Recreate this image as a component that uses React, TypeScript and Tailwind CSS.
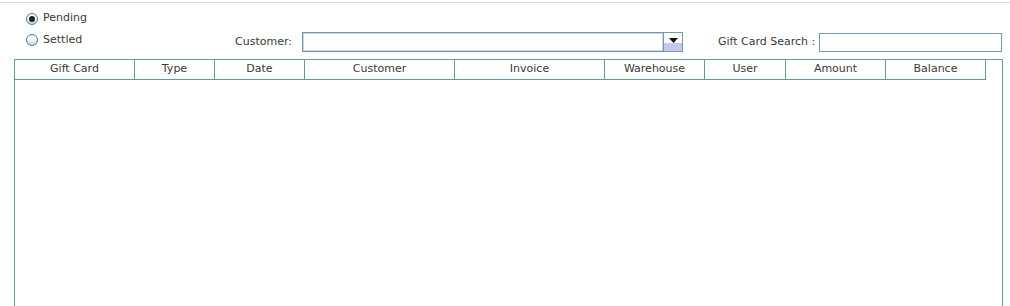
const columns = [
  { label: "Gift Card", w: "w-[120px]" },
  { label: "Type", w: "w-[80px]" },
  { label: "Date", w: "w-[90px]" },
  { label: "Customer", w: "w-[150px]" },
  { label: "Invoice", w: "w-[150px]" },
  { label: "Warehouse", w: "w-[100px]" },
  { label: "User", w: "w-[81px]" },
  { label: "Amount", w: "w-[100px]" },
  { label: "Balance", w: "w-[100px]" },
];

const Radio = ({ checked, label }: { checked?: boolean; label: string }) => (
  <label className="flex items-center gap-[5px]">
    <span className="flex h-[12px] w-[12px] items-center justify-center rounded-full border border-[#4f7f8f] bg-gradient-to-b from-white from-40% to-[#c8c8ec]">
      {checked && <span className="h-[6px] w-[6px] rounded-full bg-[#222]" />}
    </span>
    <span>{label}</span>
  </label>
);

export default function App() {
  return (
    <div className="h-[306px] w-[1010px] overflow-hidden bg-white pt-[2px] font-['DejaVu_Sans',sans-serif] text-[11px] text-[#3a3a3a]">
      <div className="border-t border-[#dcdcee]" />
      <div className="flex h-[25px] items-center pl-[26px] pt-[6px]">
        <Radio checked label="Pending" />
      </div>
      <div className="flex h-[24px] items-center">
        <div className="w-[235px] pl-[26px]">
          <Radio label="Settled" />
        </div>
        <div className="flex items-center pt-[4px]">
          <span className="w-[67px]">Customer:</span>
          <div className="flex h-[20px] w-[381px] border border-[#6f9aaa]">
            <div className="flex-1 border border-[#c9d4f0] bg-white" />
            <div className="flex w-[19px] flex-col border-l border-[#6f9aaa]">
              <div className="flex h-[10px] items-end justify-center bg-white">
                <svg width="9" height="5" viewBox="0 0 9 5">
                  <path d="M0 0H9L4.5 5Z" fill="#111" />
                </svg>
              </div>
              <div className="flex-1 bg-[#c8c8ec]" />
            </div>
          </div>
          <span className="ml-[35px] w-[101px]">Gift Card Search :</span>
          <div className="h-[19px] w-[183px] border border-[#6f9aaa] bg-white" />
        </div>
      </div>
      <div className="ml-[14px] mt-[7px] flex h-[260px] w-[989px] flex-col border-l border-r border-t border-[#5f9c9c]">
        <div className="flex h-[20px]">
          {columns.map((c) => (
            <div
              key={c.label}
              className={`${c.w} flex items-center justify-center border-b border-r border-[#5f9c9c]`}
            >
              {c.label}
            </div>
          ))}
        </div>
        <div className="flex-1" />
      </div>
    </div>
  );
}
